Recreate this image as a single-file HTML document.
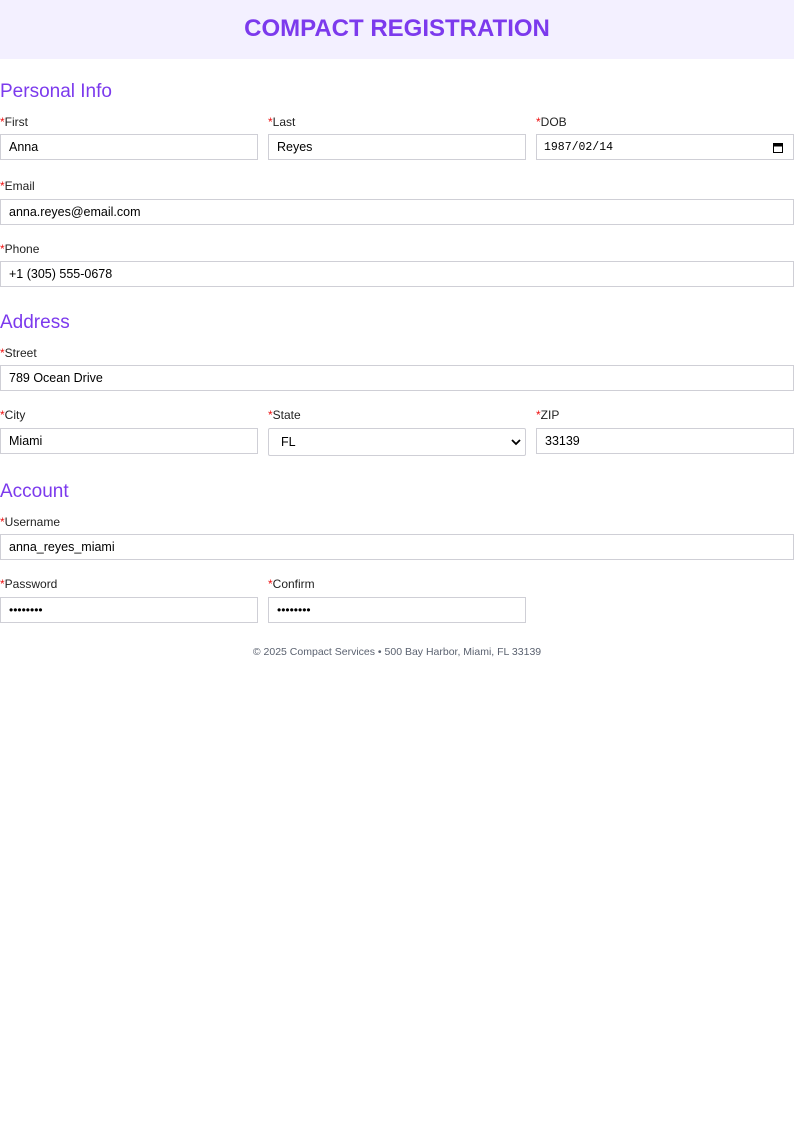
<!DOCTYPE html>
<html><head><meta charset="utf-8"><style>
*{box-sizing:border-box;margin:0;padding:0}
body{width:794px;height:1123px;background:#fff;font-family:"Liberation Sans",Arial,sans-serif;position:relative;overflow:hidden}
.hdr{position:absolute;left:0;top:0;width:794px;height:59px;background:#f3f0ff;text-align:center;line-height:58px;font-size:24px;font-weight:bold;color:#7c3aed}
.h{position:absolute;left:0;font-size:19px;color:#7c3aed}
.l{position:absolute;font-size:12px;color:#222}
.l b{color:#e11;font-weight:normal}
.i{position:absolute;height:26px;border:1px solid #cfcfd6;font-size:12.5px;line-height:24px;padding-left:8px;color:#000;background:#fff}
.pw{letter-spacing:0px;font-size:12px}
.f{position:absolute;top:646px;left:0;width:794px;text-align:center;font-size:10.5px;color:#5b6270}
</style></head><body>
<div class="hdr">COMPACT REGISTRATION</div>
<div class="h" style="top:81px">Personal Info</div>
<div class="l" style="left:0;top:115px"><b>*</b>First</div>
<div class="l" style="left:268px;top:115px"><b>*</b>Last</div>
<div class="l" style="left:536px;top:115px"><b>*</b>DOB</div>
<div class="i" style="left:0;top:134px;width:258px">Anna</div>
<div class="i" style="left:268px;top:134px;width:258px">Reyes</div>
<div class="i" style="left:536px;top:134px;width:258px;font-family:'Liberation Mono',monospace;font-size:11.5px;padding-left:7px;line-height:26px">1987/02/14<svg style="position:absolute;right:10px;top:7px" width="10" height="11" viewBox="0 0 10 11"><rect x="0.5" y="1.5" width="9" height="9" fill="none" stroke="#000"/><rect x="0.5" y="1.5" width="9" height="3" fill="#000"/></svg></div>
<div class="l" style="left:0;top:179px"><b>*</b>Email</div>
<div class="i" style="left:0;top:199px;width:794px">anna.reyes@email.com</div>
<div class="l" style="left:0;top:242px"><b>*</b>Phone</div>
<div class="i" style="left:0;top:261px;width:794px">+1 (305) 555-0678</div>
<div class="h" style="top:312px">Address</div>
<div class="l" style="left:0;top:346px"><b>*</b>Street</div>
<div class="i" style="left:0;top:365px;width:794px">789 Ocean Drive</div>
<div class="l" style="left:0;top:408px"><b>*</b>City</div>
<div class="l" style="left:268px;top:408px"><b>*</b>State</div>
<div class="l" style="left:536px;top:408px"><b>*</b>ZIP</div>
<div class="i" style="left:0;top:428px;width:258px">Miami</div>
<div class="i" style="left:268px;top:428px;width:258px;height:28px;line-height:26px;padding-left:12px;border-radius:2px">FL<svg style="position:absolute;right:4px;top:10px" width="10" height="7" viewBox="0 0 10 7"><path d="M1 1l4 4 4-4" fill="none" stroke="#000" stroke-width="1.8"/></svg></div>
<div class="i" style="left:536px;top:428px;width:258px">33139</div>
<div class="h" style="top:481px">Account</div>
<div class="l" style="left:0;top:515px"><b>*</b>Username</div>
<div class="i" style="left:0;top:534px;width:794px">anna_reyes_miami</div>
<div class="l" style="left:0;top:577px"><b>*</b>Password</div>
<div class="l" style="left:268px;top:577px"><b>*</b>Confirm</div>
<div class="i pw" style="left:0;top:597px;width:258px">••••••••</div>
<div class="i pw" style="left:268px;top:597px;width:258px">••••••••</div>
<div class="f">© 2025 Compact Services • 500 Bay Harbor, Miami, FL 33139</div>
</body></html>
